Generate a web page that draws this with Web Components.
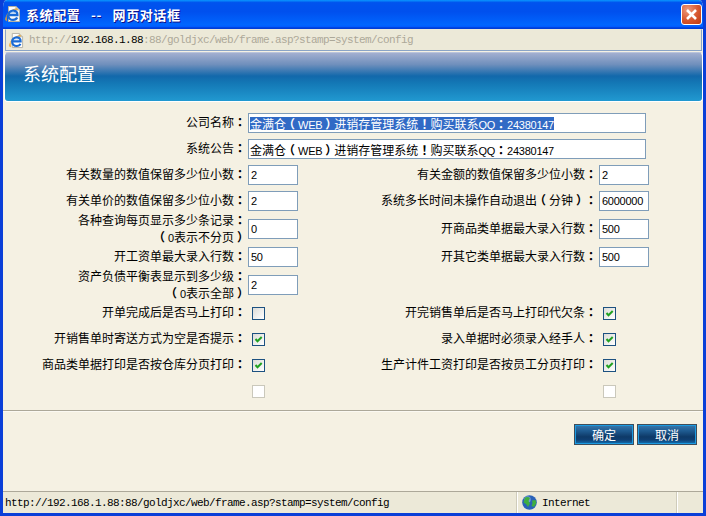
<!DOCTYPE html>
<html lang="zh-CN"><head><meta charset="utf-8"><title>系统配置</title>
<style>html,body{margin:0;padding:0;background:#0a3fd8}body{width:706px;height:516px;overflow:hidden}</style>
</head><body>
<x-window>
  <x-titlebar slot="title">系统配置 &nbsp;&nbsp;-- &nbsp;&nbsp;网页对话框</x-titlebar>
  <x-addressbar slot="address"></x-addressbar>
  <x-banner slot="banner">系统配置</x-banner>
  <x-form slot="form">
    <x-label>公司名称：</x-label><x-field wide selected>金满仓（WEB）进销存管理系统！购买联系QQ：24380147</x-field>
    <x-label>系统公告：</x-label><x-field wide>金满仓（WEB）进销存管理系统！购买联系QQ：24380147</x-field>
    <x-label>有关数量的数值保留多少位小数：</x-label><x-field>2</x-field><x-label>有关金额的数值保留多少位小数：</x-label><x-field>2</x-field>
    <x-label>有关单价的数值保留多少位小数：</x-label><x-field>2</x-field><x-label>系统多长时间未操作自动退出（分钟）：</x-label><x-field>6000000</x-field>
    <x-label two>各种查询每页显示多少条记录：|（0表示不分页）</x-label><x-field>0</x-field><x-label>开商品类单据最大录入行数：</x-label><x-field>500</x-field>
    <x-label>开工资单最大录入行数：</x-label><x-field>50</x-field><x-label>开其它类单据最大录入行数：</x-label><x-field>500</x-field>
    <x-label two>资产负债平衡表显示到多少级：|（0表示全部）</x-label><x-field>2</x-field><span></span><span></span>
    <x-label check>开单完成后是否马上打印：</x-label><x-check></x-check><x-label check>开完销售单后是否马上打印代欠条：</x-label><x-check checked></x-check>
    <x-label check>开销售单时寄送方式为空是否提示：</x-label><x-check checked></x-check><x-label check>录入单据时必须录入经手人：</x-label><x-check checked></x-check>
    <x-label check>商品类单据打印是否按仓库分页打印：</x-label><x-check checked></x-check><x-label check>生产计件工资打印是否按员工分页打印：</x-label><x-check checked></x-check>
    <span></span><x-check disabled></x-check><span></span><x-check disabled></x-check>
  </x-form>
  <x-footer slot="footer"><x-btn>确定</x-btn><x-btn>取消</x-btn></x-footer>
  <x-statusbar slot="status"></x-statusbar>
</x-window>
<script>
const IE=(s)=>`<svg width="${s}" height="${s}" viewBox="0 0 16 16" style="display:block;overflow:visible">
<path d="M3.5 .5h7.5l3.5 3.5v11.5h-11z" fill="#fdfdfb" stroke="#b4b2a6"/><path d="M11 .5v3.5h3.5" fill="#dedcd2" stroke="#b4b2a6"/>
<path d="M1.6 9.5C3.5 6 8 3.2 13 3.2 11.5 1.6 4 4 .9 11.2c-.8 2.2-.6 3.6 1 3.6" fill="#efa52c" stroke="#efa52c" stroke-width=".5"/>
<path d="M3.8 9h8.6C12.6 6 10.4 4.6 8.2 4.6 5.6 4.6 3.3 6.6 3.3 9.4c0 2.7 2.2 4.5 4.8 4.5 1.9 0 3.4-.9 4.1-2.3" fill="none" stroke="#1a6bd6" stroke-width="2.3"/>
<path d="M6 6.8c1.2-.9 3-.9 4 0" fill="none" stroke="#7fb4ef" stroke-width=".8"/>
</svg>`;
const def=(name,css,html,extra)=>{customElements.define(name,class extends HTMLElement{
  constructor(){super();this.attachShadow({mode:'open'}).innerHTML=`<style>${css}</style>${html}`;}
  connectedCallback(){extra&&extra.call(this)}
})};
const fmt=t=>t.replace(/[：（）！]|[A-Za-z0-9]+|\|/g,m=>m==='|'?'<br>':/[A-Za-z0-9]/.test(m)?`<span class="l">${m}</span>`:`<span class="p${m==='（'||m==='）'?' o':''}" lang="zh-TW">${m}</span>`);
const slotted=`::slotted(.p){font-family:"Noto Sans CJK TC",sans-serif;font-weight:bold}::slotted(.o){font-feature-settings:"halt";margin:0 3px}::slotted(.l){font:11px "Liberation Sans",sans-serif;letter-spacing:-.25px}`;
const CJK=`"Noto Sans CJK SC","Noto Sans CJK TC",sans-serif`;
const LAT=`"Liberation Sans","Noto Sans CJK SC",sans-serif`;
const MONO=`font:11px "Liberation Mono",monospace;letter-spacing:-.6px;white-space:pre`;
const wrap=function(){if(!this.dataset.f){this.dataset.f=1;this.innerHTML=fmt(this.textContent)}};

def('x-window',`:host{display:flex;flex-direction:column;width:706px;height:516px;box-sizing:border-box;background:#f5f1e3;border:solid #0a3fd8;border-width:0 3px 3px;border-radius:7px 7px 0 0;overflow:hidden;color:#000;font:12px ${CJK}}
.t{margin:0 -3px}`,`<div class="t"><slot name="title"></slot></div><slot name="address"></slot><slot name="banner"></slot><slot name="form"></slot><slot name="footer"></slot><slot name="status"></slot>`);

def('x-titlebar',`:host{display:block}
.b{display:flex;align-items:center;height:29px;box-sizing:border-box;padding:0 5px 1px;background:linear-gradient(#0997ff 0,#0053ee 9%,#0050ee 40%,#0066ff 86%,#005bff 92%,#003dd7 96%,#003dd7 100%)}
.i{margin-right:5px}.x{flex:1;color:#fff;font:bold 13px ${CJK};letter-spacing:.6px;text-shadow:1px 1px 0 #0f1089;white-space:pre}
.c{width:21px;height:21px;box-sizing:border-box;border:1px solid #fff;border-radius:3px;background:radial-gradient(circle at 30% 25%,#ee9a7c,#d6562e 55%,#bd3a12);margin-right:-1px}
.c svg{display:block}`,`<div class="b"><div class="i">${IE(16)}</div><div class="x"><slot></slot></div><div class="c"><svg width="19" height="19" viewBox="0 0 19 19"><path d="M5 5l9 9M14 5l-9 9" stroke="#fff" stroke-width="2.6"/></svg></div></div>`);

def('x-addressbar',`:host{display:flex;align-items:center;height:22px;margin:0 1px 1px 2px;box-sizing:border-box;background:#ece9d8;border:1px solid #8aa4c6;border-top-color:#ece9d8;padding-left:3px}
.u{${MONO};color:#aca899;margin-left:5px}.u b{font-weight:normal;color:#000}`,`${IE(15)}<div class="u">http://<b>192.168.1.88</b>:88/goldjxc/web/frame.asp?stamp=system/config</div>`);

def('x-banner',`:host{display:flex;align-items:center;height:50px;margin:0 0 1px 1px;box-sizing:border-box;padding:0 0 8px 18px;border:solid #fff;border-width:0 1px 1px 1px;border-top:1px solid #b9c4dc;border-radius:4px;color:#fff;font-size:18px;
background:linear-gradient(#a2afd0 0,#6f8fbc 24%,#1268ab 48%,#1377b5 62%,#2199d0 100%)}`,`<slot></slot>`);

def('x-form',`:host{display:grid;grid-template-columns:245px 105px 246px 1fr;grid-template-rows:26px 26px 26px 28px 28px 28px 32px 26px 26px 26px 25px;padding-top:10px;height:308px;box-sizing:border-box;border-bottom:1px solid #aca899;box-shadow:0 1px 0 #fbf9f2}`,`<slot></slot>`);

def('x-label',`:host{display:flex;align-items:center;justify-content:flex-end;height:20px;padding:0 2px 1px 0;box-sizing:border-box;text-align:right;white-space:nowrap;font:12px/15px ${LAT}}
:host([two]){height:30px;margin-top:-5px}:host([check]){height:13px;margin-top:-1px;padding-bottom:0}
div{display:block}${slotted}`,`<div><slot></slot></div>`,wrap);

def('x-field',`:host{display:block;width:50px;height:20px;box-sizing:border-box;border:1px solid #7f9db9;background:#fff;padding:0 0 0 2px;white-space:nowrap;overflow:hidden;font:12px ${LAT}}
:host([wide]){grid-column:span 3;width:398px;padding-left:1px}
:host([selected]){color:#fff}
.s{display:inline-block;height:13px;line-height:13px;vertical-align:top;margin-top:3px}
:host([selected]) .s{background:#316ac5}${slotted}`,`<span class="s"><slot></slot></span>`,wrap);

def('x-check',`:host{display:block;width:13px;height:13px;margin-left:4px;box-sizing:border-box;border:1px solid #1c5180;background:linear-gradient(135deg,#dcdcd7,#fff)}
:host([disabled]){border-color:#cac8bb;background:#fff}
svg{display:none}:host([checked]) svg{display:block}`,`<svg width="11" height="11" viewBox="0 0 11 11"><path d="M2.5 5l2 2.2L8.7 3" fill="none" stroke="#21a121" stroke-width="2"/></svg>`);

def('x-footer',`:host{display:flex;justify-content:flex-end;gap:3px;padding:13px 6px 0 0;height:80px;box-sizing:border-box}`,`<slot></slot>`);

def('x-btn',`:host{display:flex;align-items:center;justify-content:center;width:60px;height:21px;box-sizing:border-box;border:1px solid #3f4d5a;color:#fff;font-size:12px;box-shadow:inset 0 0 0 1px #1b9be2;
background:linear-gradient(#3a78ad 0,#1f5c92 30%,#0e3a68 62%,#0f3f72 78%,#1273b8 100%)}`,`<slot></slot>`);

def('x-statusbar',`:host{display:flex;align-items:center;height:22px;box-sizing:border-box;background:#ece9d8;border-top:1px solid #aca899;margin:0;${MONO};color:#000}
.a{width:514px;padding-left:2px;box-sizing:border-box}.z{width:160px;display:flex;align-items:center;height:100%;box-sizing:border-box;border-left:1px solid #fff;box-shadow:-1px 0 0 #cfccbb;padding-left:4px}
.z span{margin-left:5px}.e{width:24px;height:100%;box-sizing:border-box;border-left:1px solid #fff;box-shadow:-1px 0 0 #cfccbb}`,
`<div class="a">http://192.168.1.88:88/goldjxc/web/frame.asp?stamp=system/config</div><div class="z"><svg width="15" height="15" viewBox="0 0 15 15"><circle cx="7.5" cy="7.5" r="7.3" fill="#2a62b8"/><circle cx="5.5" cy="4.5" r="3.2" fill="#8fb6e8" opacity=".7"/><path d="M3 2.5c2-1 4-.6 5 .5L6.5 6 8 8.5 6 12 4 9 1.5 7.5z" fill="#3fae3f"/><path d="M10 5.5l3.5-.5.8 3-2.3 4-2.5-1 1-3z" fill="#3fae3f"/></svg><span>Internet</span></div><div class="e"></div>`);
</script>
</body></html>
